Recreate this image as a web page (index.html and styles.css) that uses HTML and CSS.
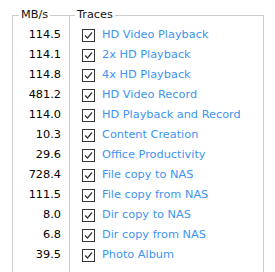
FILE: index.html
```html
<!DOCTYPE html>
<html lang="en">
<head>
<meta charset="UTF-8" />
<title>Traces</title>
<link rel="stylesheet" href="styles.css">
</head>
<body>
  <div class="panel">
    <div class="group rates">
      <div class="caption">MB/s</div>
      <div class="rows">
        <div class="row">114.5</div>
        <div class="row">114.1</div>
        <div class="row">114.8</div>
        <div class="row">481.2</div>
        <div class="row">114.0</div>
        <div class="row">10.3</div>
        <div class="row">29.6</div>
        <div class="row">728.4</div>
        <div class="row">111.5</div>
        <div class="row">8.0</div>
        <div class="row">6.8</div>
        <div class="row">39.5</div>
      </div>
    </div>

    <div class="group traces">
      <div class="caption">Traces</div>
      <div class="rows">
        <div class="row"><span class="box"><svg viewBox="0 0 11 11"><path d="M2 5.5 L4.5 8 L9 2.5"/></svg></span><span class="label">HD Video Playback</span></div>
        <div class="row"><span class="box"><svg viewBox="0 0 11 11"><path d="M2 5.5 L4.5 8 L9 2.5"/></svg></span><span class="label">2x HD Playback</span></div>
        <div class="row"><span class="box"><svg viewBox="0 0 11 11"><path d="M2 5.5 L4.5 8 L9 2.5"/></svg></span><span class="label">4x HD Playback</span></div>
        <div class="row"><span class="box"><svg viewBox="0 0 11 11"><path d="M2 5.5 L4.5 8 L9 2.5"/></svg></span><span class="label">HD Video Record</span></div>
        <div class="row"><span class="box"><svg viewBox="0 0 11 11"><path d="M2 5.5 L4.5 8 L9 2.5"/></svg></span><span class="label">HD Playback and Record</span></div>
        <div class="row"><span class="box"><svg viewBox="0 0 11 11"><path d="M2 5.5 L4.5 8 L9 2.5"/></svg></span><span class="label">Content Creation</span></div>
        <div class="row"><span class="box"><svg viewBox="0 0 11 11"><path d="M2 5.5 L4.5 8 L9 2.5"/></svg></span><span class="label">Office Productivity</span></div>
        <div class="row"><span class="box"><svg viewBox="0 0 11 11"><path d="M2 5.5 L4.5 8 L9 2.5"/></svg></span><span class="label">File copy to NAS</span></div>
        <div class="row"><span class="box"><svg viewBox="0 0 11 11"><path d="M2 5.5 L4.5 8 L9 2.5"/></svg></span><span class="label">File copy from NAS</span></div>
        <div class="row"><span class="box"><svg viewBox="0 0 11 11"><path d="M2 5.5 L4.5 8 L9 2.5"/></svg></span><span class="label">Dir copy to NAS</span></div>
        <div class="row"><span class="box"><svg viewBox="0 0 11 11"><path d="M2 5.5 L4.5 8 L9 2.5"/></svg></span><span class="label">Dir copy from NAS</span></div>
        <div class="row"><span class="box"><svg viewBox="0 0 11 11"><path d="M2 5.5 L4.5 8 L9 2.5"/></svg></span><span class="label">Photo Album</span></div>
      </div>
    </div>
  </div>
</body>
</html>
```

FILE: styles.css
```css
html, body{
  height: 272px;
  overflow: hidden;
}

body{
  margin: 0;
  background-color: white;
  font-family: "DejaVu Sans", Verdana, sans-serif;
  font-size: 11.3px;
  color: black;
}

.panel{
  display: flex;
  height: 272px;
  box-sizing: border-box;
  padding: 15px 0 0 12px;
}

.group{
  border: 1px solid #cbcbcb;
  border-bottom: none;
  box-sizing: border-box;
  flex-shrink: 0;
}

.caption{
  width: fit-content;
  margin-top: -9px;
  padding: 0 2px;
  line-height: 16px;
  background-color: white;
  color: #111;
}

.rows{
  margin-top: 2px;
}

.rates{
  width: 58px;
  padding-right: 8px;
}

.rates .caption{
  margin-left: 6px;
}

.rates .row{
  text-align: right;
}

.traces{
  width: 195px;
  margin-left: -1px;
  padding-left: 12px;
}

.traces .caption{
  margin-left: -7px;
}

.row{
  height: 20px;
  line-height: 20px;
  white-space: nowrap;
}

.traces .row{
  display: flex;
  align-items: center;
}

.box{
  width: 11px;
  height: 11px;
  border: 1px solid #333;
  margin-right: 7px;
}

.box svg{
  display: block;
  width: 11px;
  height: 11px;
  fill: none;
  stroke: #333;
  stroke-width: 1.2;
}

.label{
  color: #3d94f2;
}
```
